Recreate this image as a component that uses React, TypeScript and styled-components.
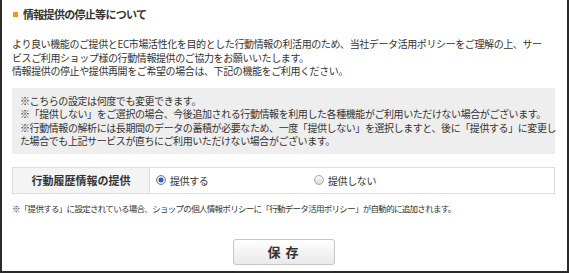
import * as React from "react";
import styled, { createGlobalStyle } from "styled-components";

const GlobalStyle = createGlobalStyle`
  html, body {
    margin: 0;
    padding: 0;
    background: #ffffff;
  }
  body {
    font-family: "Noto Sans CJK JP", "Noto Sans", sans-serif;
    color: #333333;
  }
`;

const Frame = styled.div`
  box-sizing: border-box;
  width: 569px;
  height: 273px;
  padding: 7px 12px 0 10px;
  border-left: 2px solid #2b2b2b;
  border-right: 2px solid #2b2b2b;
  border-bottom: 2px solid #2b2b2b;
  display: flex;
  flex-direction: column;
`;

const Heading = styled.h2`
  margin: 0;
  display: flex;
  align-items: center;
  gap: 5px;
  height: 14px;
  font-size: 11px;
  font-weight: bold;
  letter-spacing: -0.7px;
  color: #333333;

  &::before {
    content: "";
    width: 5px;
    height: 5px;
    margin-left: 1px;
    background: #f39a1b;
  }
`;

const Lines = styled.p`
  margin: 16px 0 0;
  font-size: 10px;
  line-height: 13.5px;
  letter-spacing: -0.4px;
  white-space: nowrap;
  color: #333333;
`;

const NoteBox = styled.div`
  margin-top: 10px;
  padding: 6px 8px;
  background: #eeeeee;
  font-size: 10px;
  line-height: 13.5px;
  letter-spacing: -0.42px;
  white-space: nowrap;
  color: #333333;
`;

const SettingTable = styled.div`
  margin-top: 13px;
  display: grid;
  grid-template-columns: 137px 1fr;
  height: 27px;
  box-sizing: border-box;
  border: 1px solid #dddddd;
`;

const LabelCell = styled.div`
  display: flex;
  align-items: center;
  justify-content: center;
  background: #f4f4f4;
  border-right: 1px solid #dddddd;
  font-size: 11px;
  font-weight: bold;
  color: #333333;
`;

const ValueCell = styled.div`
  display: flex;
  align-items: center;
  padding-left: 6px;
`;

const Option = styled.label`
  display: flex;
  align-items: center;
  gap: 4px;
  width: 158px;
  font-size: 10px;
  letter-spacing: -0.4px;
  color: #333333;
`;

const RadioMark = styled.span<{ $checked?: boolean }>`
  position: relative;
  box-sizing: border-box;
  width: 10px;
  height: 10px;
  border-radius: 50%;
  border: 1px solid ${(p) => (p.$checked ? "#6f7f92" : "#a9a9a9")};
  background: ${(p) =>
    p.$checked
      ? "radial-gradient(circle at 50% 50%, #2f74d6 0, #1a4fa8 2.4px, #e6ebf2 2.6px, #c9d1dc 100%)"
      : "linear-gradient(#fbfbfb, #d7d7d7)"};
`;

const Footnote = styled.p`
  margin: 8px 0 0;
  font-size: 8.5px;
  line-height: 12px;
  letter-spacing: -0.7px;
  white-space: nowrap;
  color: #333333;
`;

const ButtonRow = styled.div`
  margin-top: 25px;
  display: flex;
  justify-content: center;
`;

const SaveButton = styled.button`
  width: 102px;
  height: 26px;
  border: 1px solid #c6c6c6;
  border-radius: 3px;
  background: linear-gradient(#ffffff, #e9e9e9);
  font-family: "Noto Sans CJK JP", "Noto Sans", sans-serif;
  font-size: 13px;
  font-weight: bold;
  color: #333333;
  letter-spacing: 1px;
  cursor: pointer;
`;

const options = [
  { label: "提供する", checked: true },
  { label: "提供しない", checked: false },
];

export default function App() {
  return (
    <>
      <GlobalStyle />
      <Frame>
        <Heading>情報提供の停止等について</Heading>
        <Lines>
          より良い機能のご提供とEC市場活性化を目的とした行動情報の利活用のため、当社データ活用ポリシーをご理解の上、サー
          <br />
          ビスご利用ショップ様の行動情報提供のご協力をお願いいたします。
          <br />
          情報提供の停止や提供再開をご希望の場合は、下記の機能をご利用ください。
        </Lines>
        <NoteBox>
          ※こちらの設定は何度でも変更できます。
          <br />
          ※「提供しない」をご選択の場合、今後追加される行動情報を利用した各種機能がご利用いただけない場合がございます。
          <br />
          ※行動情報の解析には長期間のデータの蓄積が必要なため、一度「提供しない」を選択しますと、後に「提供する」に変更し
          <br />
          た場合でも上記サービスが直ちにご利用いただけない場合がございます。
        </NoteBox>
        <SettingTable>
          <LabelCell>行動履歴情報の提供</LabelCell>
          <ValueCell>
            {options.map((o) => (
              <Option key={o.label}>
                <RadioMark $checked={o.checked} />
                {o.label}
              </Option>
            ))}
          </ValueCell>
        </SettingTable>
        <Footnote>
          ※「提供する」に設定されている場合、ショップの個人情報ポリシーに「行動データ活用ポリシー」が自動的に追加されます。
        </Footnote>
        <ButtonRow>
          <SaveButton>保 存</SaveButton>
        </ButtonRow>
      </Frame>
    </>
  );
}
